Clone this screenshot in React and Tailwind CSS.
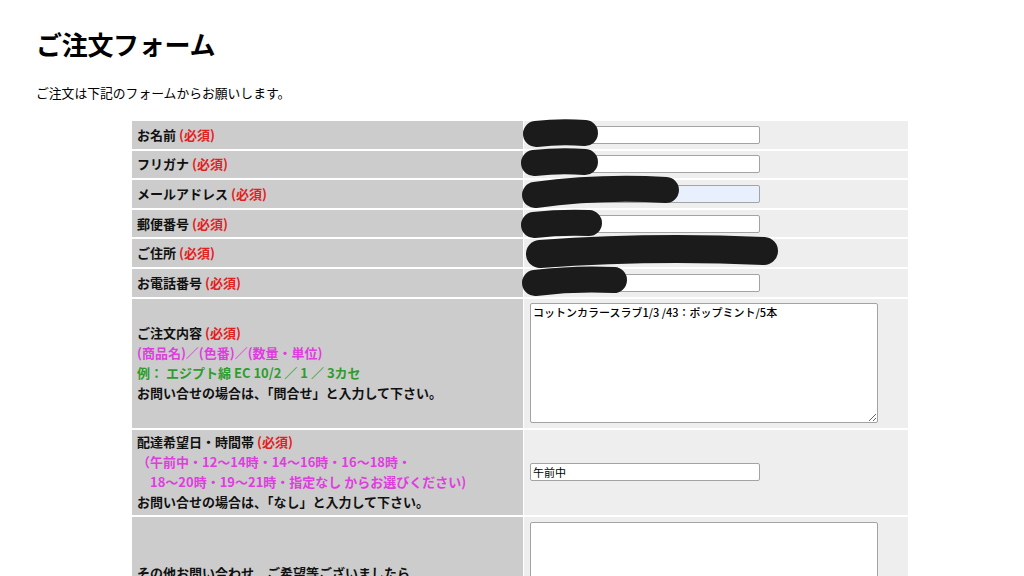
import React from "react";

const font = { fontFamily: '"Noto Sans CJK JP", "Noto Sans", sans-serif' };

function Req() {
  return <span className="text-[#e3201e]"> (必須)</span>;
}

function Input({ value = "", blue = false }) {
  return (
    <input
      readOnly
      value={value}
      className={`block w-[230px] h-[18px] border border-[#a3a3a3] rounded-[2px] px-[2px] text-[11px] text-black outline-none ${blue ? "bg-[#e8f0fe]" : "bg-white"}`}
      style={font}
    />
  );
}

function Row({ h, label, children, top = false }) {
  return (
    <div className="grid grid-cols-[391px_384px] grid-rows-1 gap-[1px]" style={{ height: h }}>
      <div className="bg-[#cccccc] flex items-center pl-[5px] text-[13px] font-bold text-[#111] leading-[20px] min-h-0">
        <div>{label}</div>
      </div>
      <div className={`bg-[#eeeeee] flex pl-[6px] min-h-0 ${top ? "items-start pt-[5px]" : "items-center"}`}>{children}</div>
    </div>
  );
}

function Scribbles() {
  const lines = [
    { d: "M536 134 Q560 131 585 133", w: 26 },
    { d: "M534 163 Q560 160 585 162", w: 26 },
    { d: "M535 195 Q600 186 666 190", w: 26 },
    { d: "M534 225 Q560 222 589 223", w: 26 },
    { d: "M540 254 Q650 246 764 251", w: 28 },
    { d: "M535 283 Q575 278 614 280", w: 26 },
  ];
  return (
    <svg className="absolute left-0 top-0 pointer-events-none" width="1024" height="576">
      {lines.map((l, i) => (
        <path key={i} d={l.d} stroke="#1b1b1b" strokeWidth={l.w} strokeLinecap="round" fill="none" />
      ))}
    </svg>
  );
}

export default function App() {
  return (
    <div className="relative w-[1024px] h-[576px] overflow-hidden bg-white text-black" style={font}>
      <div className="pl-[36px] pt-[28px]">
        <h1 className="text-[26px] font-bold leading-[32px] tracking-[-0.3px]">ご注文フォーム</h1>
        <p className="mt-[24px] text-[12.8px] leading-[18px]">ご注文は下記のフォームからお願いします。</p>
      </div>
      <div className="ml-[132px] mt-[19px] flex flex-col gap-[2px]">
        <Row h={27.6} label={<>お名前<Req /></>}><Input /></Row>
        <Row h={27.6} label={<>フリガナ<Req /></>}><Input /></Row>
        <Row h={27.6} label={<>メールアドレス<Req /></>}><Input blue /></Row>
        <Row h={27.6} label={<>郵便番号<Req /></>}><Input /></Row>
        <Row h={27.6} label={<>ご住所<Req /></>}><Input /></Row>
        <Row h={27.6} label={<>お電話番号<Req /></>}><Input /></Row>
        <Row
          h={129}
          label={
            <>
              <div>ご注文内容<Req /></div>
              <div className="text-[#e03de0]">(商品名)／(色番)／(数量・単位)</div>
              <div className="text-[#2d9d2d]">例： エジプト綿 EC 10/2 ／ 1 ／ 3カセ</div>
              <div>お問い合せの場合は、「問合せ」と入力して下さい。</div>
            </>
          }
        >
          <textarea
            readOnly
            value="コットンカラースラブ1/3 /43：ポップミント/5本"
            className="block w-[348px] h-[120px] bg-white border border-[#a3a3a3] rounded-[2px] px-[2px] py-[1px] text-[11px] font-medium leading-[14px] text-black outline-none"
            style={font}
          />
        </Row>
        <Row
          h={85}
          label={
            <>
              <div>配達希望日・時間帯<Req /></div>
              <div className="text-[#e03de0]">（午前中・12〜14時・14〜16時・16〜18時・</div>
              <div className="text-[#e03de0]">　18〜20時・19〜21時・指定なし からお選びください)</div>
              <div>お問い合せの場合は、「なし」と入力して下さい。</div>
            </>
          }
        >
          <Input value="午前中" />
        </Row>
        <Row
          h={112}
          top
          label={<div>その他お問い合わせ、ご希望等ございましたら、</div>}
        >
          <textarea
            readOnly
            value=""
            className="block w-[348px] h-[120px] shrink-0 bg-white border border-[#a3a3a3] rounded-[2px] outline-none"
          />
        </Row>
      </div>
      <Scribbles />
    </div>
  );
}
